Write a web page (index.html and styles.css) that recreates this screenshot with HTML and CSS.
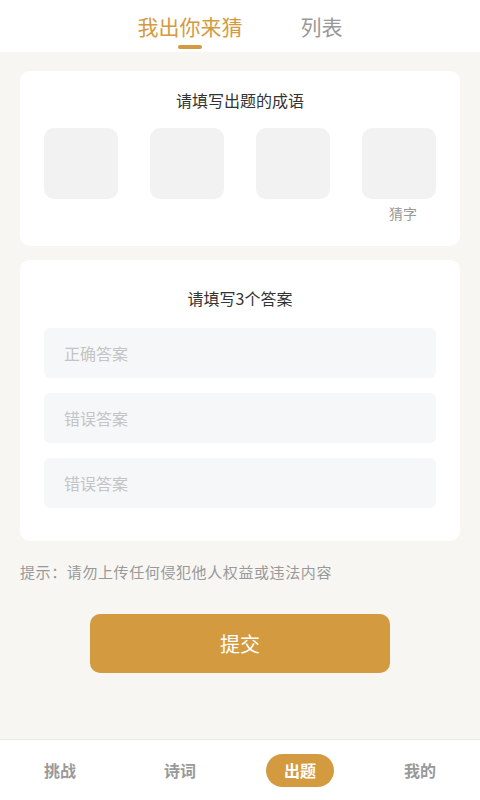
FILE: index.html
```html
<!DOCTYPE html>
<html lang="zh">
<head>
  <meta charset="UTF-8">
  <meta name="viewport" content="width=device-width, initial-scale=1">
  <title>出题</title>
  <link rel="stylesheet" href="styles.css">
</head>
<body>
  <div class="page">
    <header class="tabs">
      <div class="tab active">我出你来猜</div>
      <div class="tab">列表</div>
    </header>

    <main class="content">
      <section class="card idiom">
        <h2>请填写出题的成语</h2>
        <div class="chars">
          <div class="char"><div class="box"></div></div>
          <div class="char"><div class="box"></div></div>
          <div class="char"><div class="box"></div></div>
          <div class="char"><div class="box"></div><span class="guess">猜字</span></div>
        </div>
      </section>

      <section class="card answers">
        <h2>请填写3个答案</h2>
        <input type="text" placeholder="正确答案">
        <input type="text" placeholder="错误答案">
        <input type="text" placeholder="错误答案">
      </section>

      <p class="hint">提示：请勿上传任何侵犯他人权益或违法内容</p>

      <button class="submit">提交</button>
    </main>

    <nav class="tabbar">
      <div class="item">挑战</div>
      <div class="item">诗词</div>
      <div class="item"><span class="pill">出题</span></div>
      <div class="item">我的</div>
    </nav>
  </div>
</body>
</html>
```

FILE: styles.css
```css
body {
  margin: 0;
  font-family: "Noto Sans CJK SC", "Noto Sans", sans-serif;
  background-color: #f7f6f3;
}

.page {
  height: 800px;
  display: flex;
  flex-direction: column;
}

.tabs {
  height: 52px;
  background-color: white;
  display: flex;
  justify-content: center;
  gap: 58px;
}

.tab {
  font-size: 21px;
  line-height: 52px;
  height: 52px;
  color: #999;
  position: relative;
}

.tab.active {
  color: #d49a40;
}

.tab.active::after {
  content: "";
  position: absolute;
  left: 50%;
  bottom: 3px;
  width: 24px;
  height: 4px;
  margin-left: -12px;
  border-radius: 2px;
  background-color: #d49a40;
}

.content {
  flex: 1;
  padding: 19px 20px 0;
}

.card {
  background-color: white;
  border-radius: 10px;
  padding: 0 24px;
  box-sizing: border-box;
}

.card h2 {
  margin: 0;
  font-size: 16px;
  font-weight: normal;
  color: #333;
  text-align: center;
}

.idiom {
  height: 175px;
  padding-top: 17px;
}

.chars {
  display: flex;
  justify-content: space-between;
  margin-top: 16px;
}

.char {
  width: 74px;
  display: flex;
  flex-direction: column;
  align-items: center;
}

.box {
  width: 74px;
  height: 71px;
  border-radius: 10px;
  background-color: #f2f2f2;
}

.guess {
  margin-top: 4px;
  margin-left: 8px;
  font-size: 14px;
  color: #999;
}

.answers {
  margin-top: 14px;
  height: 281px;
  padding-top: 26px;
  display: flex;
  flex-direction: column;
  gap: 15px;
}

.answers h2 {
  margin-bottom: 3px;
}

.answers input {
  height: 50px;
  border: none;
  border-radius: 6px;
  background-color: #f6f7f9;
  padding: 0 20px;
  font-family: inherit;
  font-size: 16px;
  outline: none;
}

.answers input::placeholder {
  color: #c4c4c4;
}

.hint {
  margin: 20px 0 0;
  font-size: 15px;
  letter-spacing: 0.6px;
  color: #999;
}

.submit {
  display: block;
  margin: 32px auto 0;
  width: 300px;
  height: 59px;
  border: none;
  border-radius: 10px;
  background-color: #d49a40;
  color: white;
  font-family: inherit;
  font-size: 20px;
}

.tabbar {
  height: 60px;
  border-top: 1px solid #e8e8e8;
  background-color: white;
  display: flex;
}

.item {
  flex: 1;
  display: flex;
  justify-content: center;
  align-items: center;
  font-size: 16px;
  font-weight: bold;
  color: #999;
}

.pill {
  background-color: #d49a40;
  color: white;
  padding: 0 18px;
  height: 33px;
  line-height: 33px;
  border-radius: 17px;
}
```
